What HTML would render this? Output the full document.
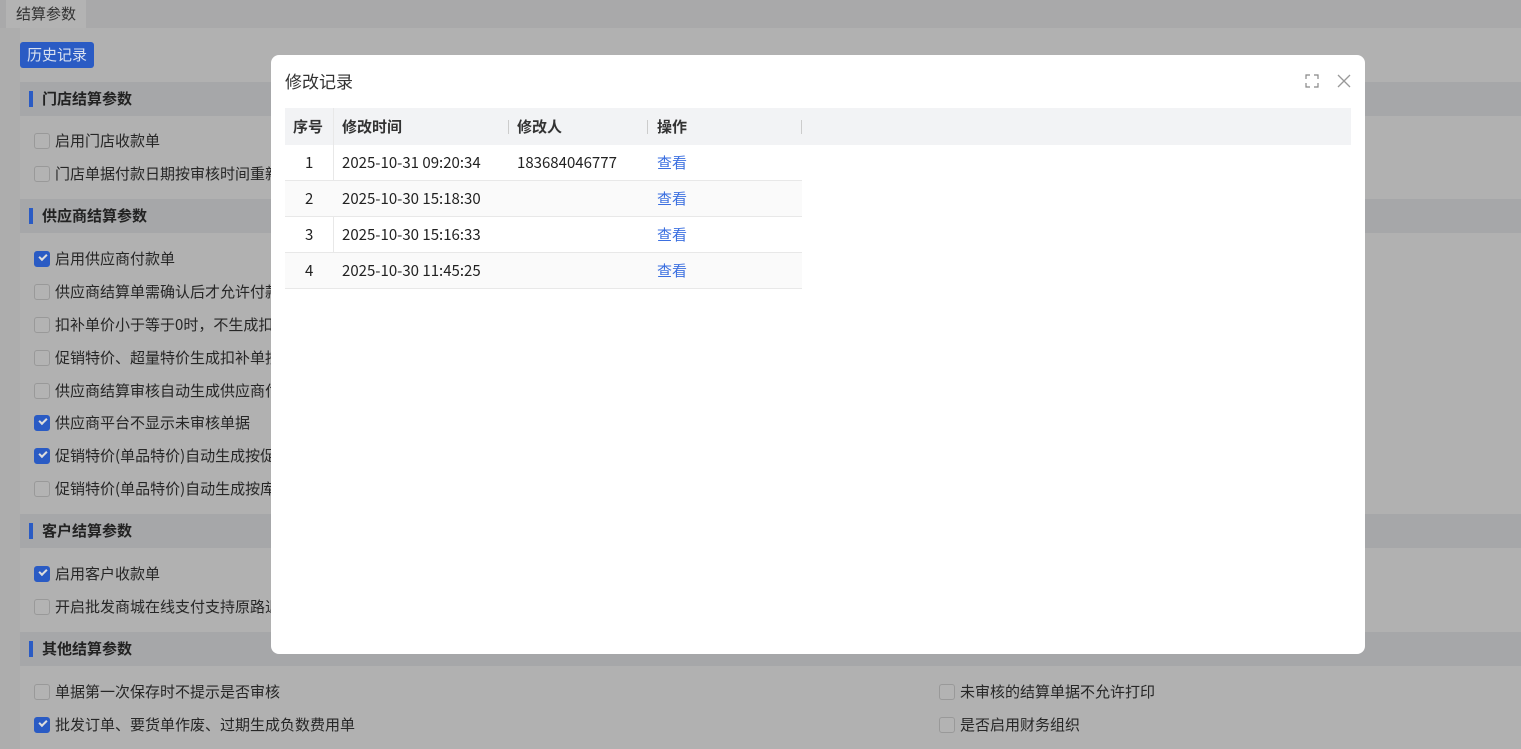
<!DOCTYPE html>
<html><head><meta charset="utf-8"><style>
*{margin:0;padding:0;box-sizing:border-box}
body{width:1521px;height:749px;overflow:hidden;background:#adadad;font-family:"Noto Sans CJK SC","Liberation Sans",sans-serif;position:relative;color:#222}
.tabbar{position:absolute;left:0;top:0;width:1521px;height:28px;background:#a9a9aa}
.tab{position:absolute;left:6px;top:0;width:80px;height:28px;background:#b3b3b3;font-size:15px;line-height:28px;padding-left:10px;color:#333}
.panel{position:absolute;left:20px;top:28px;width:1501px;height:721px;background:#b1b1b1}
.btn{position:absolute;left:20px;top:42px;width:74px;height:26px;background:#2a5bc4;border-radius:3px;color:#d8e0f0;font-size:15px;line-height:26px;text-align:center}
.sec{position:absolute;left:20px;width:1501px;height:34px;background:#a6a7a9;font-size:15px;font-weight:bold;line-height:34px;padding-left:22px;color:#222}
.sec:before{content:"";position:absolute;left:9px;top:9px;width:4px;height:16px;background:#2a5bc4}
.it{position:absolute;font-size:15px;line-height:20px;padding-left:21px;color:#262626;white-space:nowrap}
.it:before{content:"";position:absolute;left:0;top:2px;width:16px;height:16px;border:1px solid #999;border-radius:3px;background:#b3b3b3;box-sizing:border-box}
.ck:before{background:#2a5bc4;border-color:#2a5bc4}
.ck:after{content:"";position:absolute;left:5px;top:5px;width:6px;height:3px;border-left:2px solid #ddd;border-bottom:2px solid #ddd;transform:rotate(-45deg)}
.modal{position:absolute;left:271px;top:55px;width:1094px;height:599px;background:#fff;border-radius:8px}
.title{position:absolute;left:14px;top:14px;font-size:17px;line-height:24px;color:#333}
.th{position:absolute;left:14px;top:53px;width:1066px;height:37px;background:#f2f3f5}
.c{position:absolute;font-size:15px;line-height:36px;white-space:nowrap}
.h{font-weight:bold;color:#333;line-height:37px}
.row{position:absolute;left:14px;width:517px;height:36px;border-bottom:1px solid #e8e8e8}
.sep{position:absolute;width:1px;height:14px;background:#ccc;top:65px}
a{color:#3b6fe0;text-decoration:none}
</style></head><body>
<div class="tabbar"></div><div class="tab">结算参数</div>
<div class="panel"></div>
<div class="btn">历史记录</div>
<div class="sec" style="top:82px">门店结算参数</div>
<div class="it" style="left:34px;top:131px">启用门店收款单</div>
<div class="it" style="left:34px;top:164px">门店单据付款日期按审核时间重新</div>
<div class="sec" style="top:199px">供应商结算参数</div>
<div class="it ck" style="left:34px;top:249px">启用供应商付款单</div>
<div class="it" style="left:34px;top:282px">供应商结算单需确认后才允许付款</div>
<div class="it" style="left:34px;top:315px">扣补单价小于等于0时，不生成扣补</div>
<div class="it" style="left:34px;top:348px">促销特价、超量特价生成扣补单按</div>
<div class="it" style="left:34px;top:381px">供应商结算审核自动生成供应商付</div>
<div class="it ck" style="left:34px;top:413px">供应商平台不显示未审核单据</div>
<div class="it ck" style="left:34px;top:446px">促销特价(单品特价)自动生成按促</div>
<div class="it" style="left:34px;top:479px">促销特价(单品特价)自动生成按库</div>
<div class="sec" style="top:514px">客户结算参数</div>
<div class="it ck" style="left:34px;top:564px">启用客户收款单</div>
<div class="it" style="left:34px;top:597px">开启批发商城在线支付支持原路退</div>
<div class="sec" style="top:632px">其他结算参数</div>
<div class="it" style="left:34px;top:682px">单据第一次保存时不提示是否审核</div>
<div class="it ck" style="left:34px;top:715px">批发订单、要货单作废、过期生成负数费用单</div>
<div class="it" style="left:939px;top:682px">未审核的结算单据不允许打印</div>
<div class="it" style="left:939px;top:715px">是否启用财务组织</div>
<div class="modal">
<div class="title">修改记录</div>
<svg style="position:absolute;left:1034px;top:19px" width="14" height="14" viewBox="0 0 14 14" fill="none" stroke="#888" stroke-width="1.2"><path d="M1 5V1h4M9 1h4v4M13 9v4H9M5 13H1V9"/></svg>
<svg style="position:absolute;left:1066px;top:19px" width="14" height="14" viewBox="0 0 14 14" stroke="#999" stroke-width="1.3"><path d="M1 1L13 13M13 1L1 13"/></svg>
<div class="th"></div>
<div style="position:absolute;left:62px;top:53px;width:1px;height:180px;background:#e8e8e8"></div>
<div class="sep" style="left:237px"></div><div class="sep" style="left:376px"></div><div class="sep" style="left:530px"></div>
<div class="c h" style="left:22px;top:53px">序号</div>
<div class="c h" style="left:71px;top:53px">修改时间</div>
<div class="c h" style="left:246px;top:53px">修改人</div>
<div class="c h" style="left:386px;top:53px">操作</div>
<div class="row" style="top:90px"></div>
<div class="row" style="top:126px;background:#fafafa"></div>
<div class="row" style="top:162px"></div>
<div class="row" style="top:198px;background:#fafafa"></div>
<div class="c" style="left:34px;top:90px">1</div><div class="c" style="left:71px;top:90px">2025-10-31 09:20:34</div><div class="c" style="left:246px;top:90px">183684046777</div><div class="c" style="left:386px;top:90px"><a>查看</a></div>
<div class="c" style="left:34px;top:126px">2</div><div class="c" style="left:71px;top:126px">2025-10-30 15:18:30</div><div class="c" style="left:386px;top:126px"><a>查看</a></div>
<div class="c" style="left:34px;top:162px">3</div><div class="c" style="left:71px;top:162px">2025-10-30 15:16:33</div><div class="c" style="left:386px;top:162px"><a>查看</a></div>
<div class="c" style="left:34px;top:198px">4</div><div class="c" style="left:71px;top:198px">2025-10-30 11:45:25</div><div class="c" style="left:386px;top:198px"><a>查看</a></div>
</div>
</body></html>
